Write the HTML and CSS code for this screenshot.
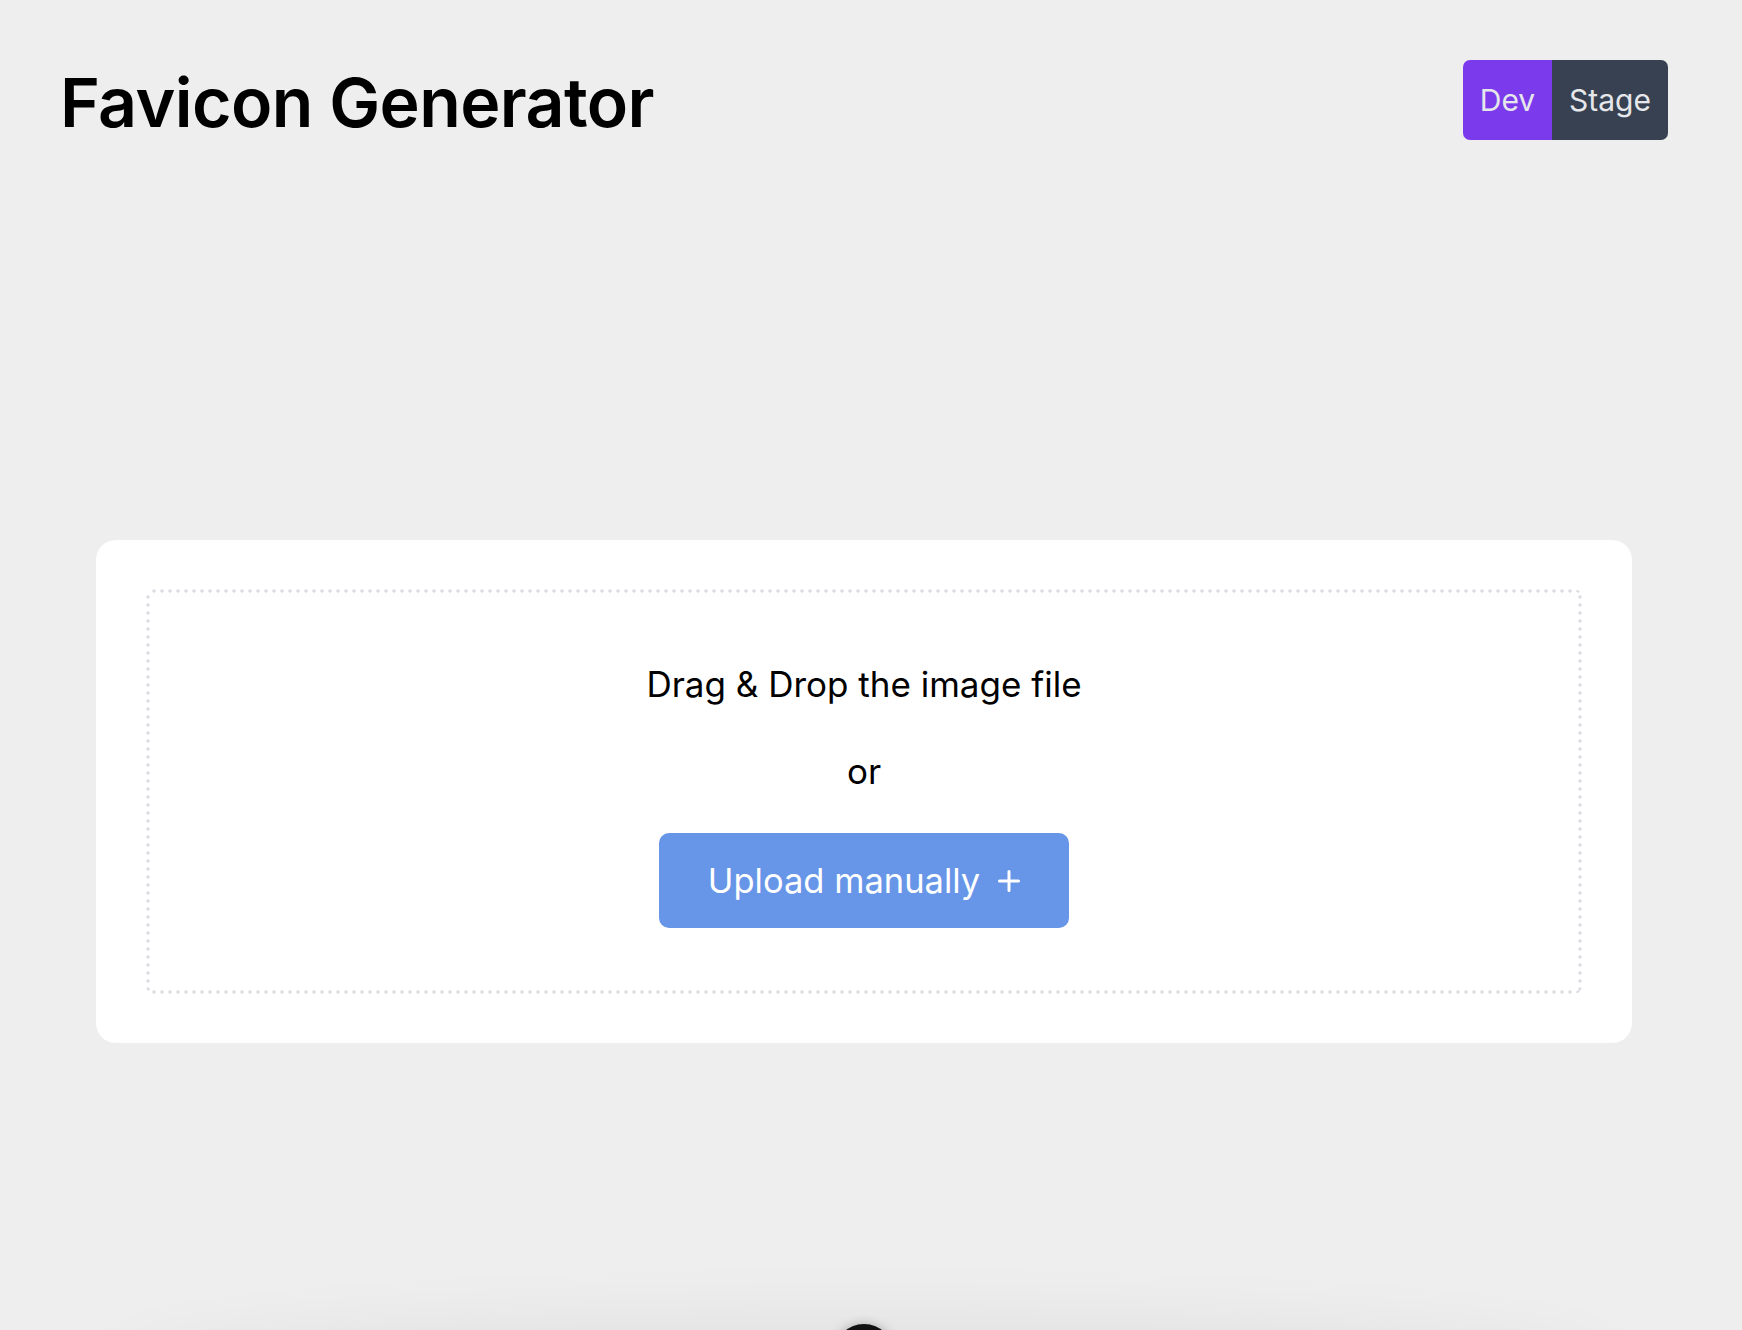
FILE: index.html
```html
<!DOCTYPE html>
<html lang="en">
<head>
<meta charset="utf-8">
<title>Favicon Generator</title>
<link rel="stylesheet" href="styles.css">
</head>
<body>
  <header class="header">
    <h1 class="title">Favicon Generator</h1>
    <div class="env-toggle">
      <button class="env-btn env-dev">Dev</button>
      <button class="env-btn env-stage">Stage</button>
    </div>
  </header>
  <main class="main">
    <section class="card">
      <div class="dropzone">
        <p class="drop-text">Drag &amp; Drop the image file</p>
        <p class="drop-text">or</p>
        <button class="upload-btn">Upload manually
          <svg class="plus" width="24" height="24" viewBox="0 0 24 24" aria-hidden="true">
            <path d="M12 2.5v19M2.5 12h19" stroke="#ffffff" stroke-width="3" stroke-linecap="round" fill="none"/>
          </svg>
        </button>
      </div>
    </section>
  </main>
  <div class="bottom-sheet">
    <div class="sheet-handle"></div>
  </div>
</body>
</html>
```
FILE: styles.css
```css
html, body {
  margin: 0;
  padding: 0;
}
body {
  background: #eeeeee;
  font-family: Inter, "Noto Sans", "Liberation Sans", sans-serif;
  color: #000;
  height: 1330px;
  overflow: hidden;
}
.header {
  display: flex;
  justify-content: space-between;
  align-items: center;
  padding: 60px 74px 0 60px;
  height: 80px;
}
.title {
  margin: 0;
  font-size: 68px;
  font-weight: 600;
  line-height: 80px;
  letter-spacing: -0.6px;
  padding-top: 4px;
}
.env-toggle {
  display: flex;
  height: 80px;
  border-radius: 7px;
  overflow: hidden;
}
.env-btn {
  border: none;
  margin: 0;
  font-family: inherit;
  font-size: 30px;
  color: #e5e7eb;
  height: 80px;
  padding: 0 16px;
}
.env-dev {
  background: #7c3aed;
  width: 89px;
}
.env-stage {
  background: #374151;
  width: 116px;
}
.main {
  padding: 400px 110px 0 96px;
}
.card {
  background: #ffffff;
  border-radius: 20px;
  padding: 49px 50px 49px;
}
.dropzone {
  border-radius: 8px;
  padding: 70px 0 66px;
  display: flex;
  flex-direction: column;
  align-items: center;
  gap: 36px;
  background-image:
    radial-gradient(circle, #dcdce3 1.4px, transparent 1.9px),
    radial-gradient(circle, #dcdce3 1.4px, transparent 1.9px),
    radial-gradient(circle, #dcdce3 1.4px, transparent 1.9px),
    radial-gradient(circle, #dcdce3 1.4px, transparent 1.9px);
  background-size: 8px 4px, 8px 4px, 4px 8px, 4px 8px;
  background-position: 4px 0, 4px 100%, 0 4px, 100% 4px;
  background-repeat: repeat-x, repeat-x, repeat-y, repeat-y;
}
.drop-text {
  margin: 0;
  font-size: 35px;
  line-height: 51px;
}
.upload-btn {
  display: flex;
  align-items: center;
  border: none;
  background: #6796e8;
  color: #ffffff;
  font-family: inherit;
  font-size: 34.5px;
  line-height: 51px;
  padding: 22px 48px 22px 49px;
  border-radius: 10px;
}
.plus {
  margin-left: 17px;
}
.bottom-sheet {
  position: fixed;
  left: 864px;
  top: 1330px;
  width: 1500px;
  height: 100px;
  margin-left: -750px;
  border-radius: 50%;
  box-shadow: 0 0 70px 10px rgba(0, 0, 0, 0.06);
}
.sheet-handle {
  position: absolute;
  left: 50%;
  top: -6px;
  width: 60px;
  height: 60px;
  margin-left: -30px;
  border-radius: 50%;
  background: #111111;
  box-shadow: 0 0 12px rgba(0, 0, 0, 0.25);
}
```
